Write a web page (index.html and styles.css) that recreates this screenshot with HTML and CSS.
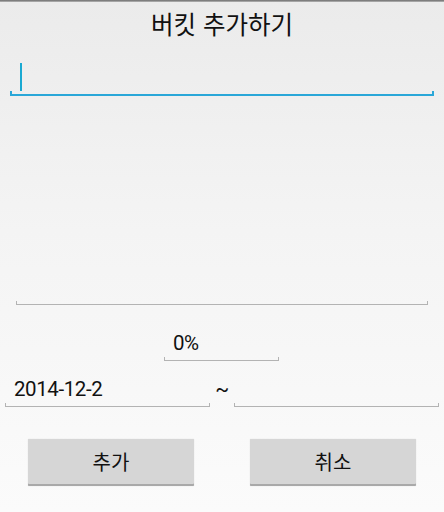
FILE: index.html
```html
<!DOCTYPE html>
<html lang="ko">
<head>
<meta charset="utf-8">
<title>버킷 추가하기</title>
<link rel="stylesheet" href="styles.css">
</head>
<body>
<div class="screen">
  <div class="topline"></div>
  <h1 class="title">버킷 추가하기</h1>

  <div class="field field-title">
    <div class="input-area"><span class="cursor"></span></div>
    <div class="line line-focus"></div>
  </div>

  <div class="field field-memo">
    <div class="memo-area"></div>
    <div class="line"></div>
  </div>

  <div class="field field-percent">
    <div class="input-area small"><span class="value">0%</span></div>
    <div class="line"></div>
  </div>

  <div class="date-row">
    <div class="field date">
      <div class="input-area small"><span class="value">2014-12-2</span></div>
      <div class="line"></div>
    </div>
    <div class="tilde-box"><span class="value tilde">~</span></div>
    <div class="field date">
      <div class="input-area small"><span class="value"></span></div>
      <div class="line"></div>
    </div>
  </div>

  <div class="buttons">
    <button class="btn">추가</button>
    <button class="btn">취소</button>
  </div>
</div>
</body>
</html>
```

FILE: styles.css
```css
html, body {
  margin: 0;
  padding: 0;
}
body {
  width: 444px;
  height: 512px;
  overflow: hidden;
  font-family: Roboto, "Noto Sans CJK KR", sans-serif;
  color: #111;
}
.screen {
  height: 512px;
  display: flex;
  flex-direction: column;
  background: linear-gradient(to bottom, #ebebeb 0%, #f4f4f4 45%, #fbfbfb 100%);
}
.topline {
  height: 2px;
  background: linear-gradient(to bottom, #6a6a6a, #b8b8b8);
}
.title {
  margin: 0;
  height: 48px;
  display: flex;
  align-items: center;
  justify-content: center;
  font-family: "Noto Sans CJK KR", Roboto, sans-serif;
  font-size: 24.5px;
  font-weight: 400;
  color: #111;
  padding-bottom: 6px;
  box-sizing: border-box;
}
.field {
  display: flex;
  flex-direction: column;
}
.field-title {
  margin: 8px 10px 0;
}
.input-area {
  height: 33px;
  display: flex;
  align-items: center;
  padding-left: 10px;
}
.cursor {
  display: block;
  width: 2px;
  height: 28px;
  background: #1aa9d2;
  margin-top: 4px;
}
.line {
  height: 3px;
  border: solid #b3b3b3;
  border-width: 0 1px 1px;
}
.line-focus {
  height: 3px;
  border-color: #2aa7d8;
  border-width: 0 2px 2px;
}
.field-memo {
  margin: 0 16px;
}
.memo-area {
  height: 205px;
}
.field-percent {
  width: 115px;
  margin: 16px 0 0 164px;
}
.input-area.small {
  height: 36px;
  padding-left: 9px;
  padding-top: 8px;
  box-sizing: border-box;
}
.value {
  font-size: 20.5px;
  letter-spacing: -0.4px;
  color: #111;
}
.date-row {
  margin-top: 6px;
  display: flex;
  align-items: flex-start;
  padding: 0 5px;
}
.date {
  width: 205px;
}
.tilde-box {
  width: 24px;
  height: 36px;
  display: flex;
  align-items: center;
  justify-content: center;
  padding-top: 8px;
  box-sizing: border-box;
}
.buttons {
  display: flex;
  justify-content: space-between;
  padding: 0 28px;
  margin-top: 32px;
}
.btn {
  width: 166px;
  height: 47px;
  border: 0;
  border-radius: 1px;
  background: #d6d6d6;
  box-shadow: inset 0 -2px 0 #a9a9a9, 0 0 1px #c8c8c8;
  font-family: "Noto Sans CJK KR", Roboto, sans-serif;
  font-size: 20px;
  color: #111;
  padding: 0 0 2px;
}
```
